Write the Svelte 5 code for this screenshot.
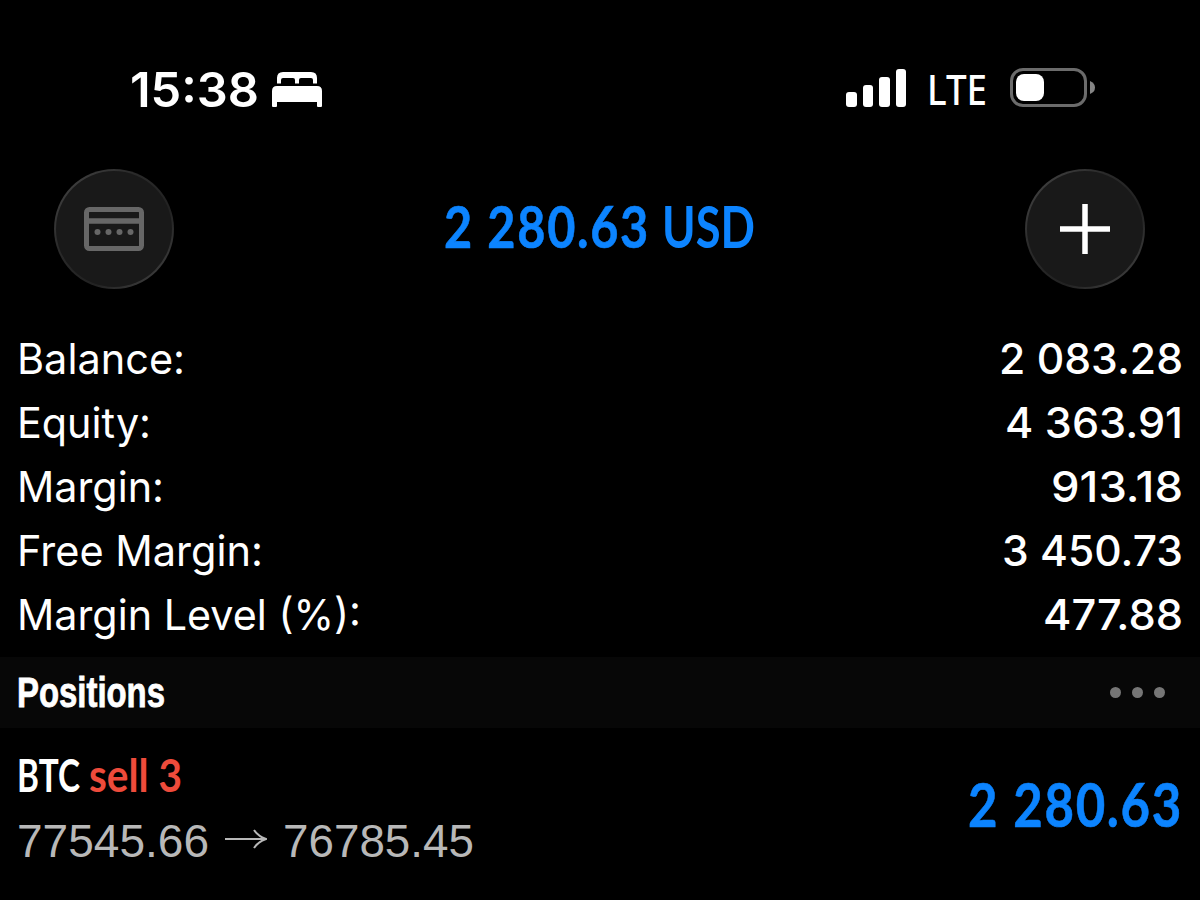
<script lang="ts">
  interface Row {
    label: string;
    labelWidth: number;
    value: string;
    valueWidth: number;
  }

  const rows: Row[] = [
    { label: 'Balance:', labelWidth: 168, value: '2 083.28', valueWidth: 184 },
    { label: 'Equity:', labelWidth: 134, value: '4 363.91', valueWidth: 178 },
    { label: 'Margin:', labelWidth: 147, value: '913.18', valueWidth: 132 },
    { label: 'Free Margin:', labelWidth: 246, value: '3 450.73', valueWidth: 181 },
    { label: 'Margin Level (%):', labelWidth: 344, value: '477.88', valueWidth: 140 },
  ];

  const bars = [15, 22, 30, 38];
</script>

<!-- One line of text set to a fixed width; `baseline` is measured from the top of its box,
     `squeeze` condenses the glyphs horizontally. -->
{#snippet line(text: string, width: number, height: number, baseline: number, kind: string, squeeze = 1)}
  <svg class={`line ${kind}`} {width} {height}>
    <text
      x="0"
      y={baseline}
      transform={`scale(${squeeze} 1)`}
      textLength={width / squeeze}
      lengthAdjust="spacingAndGlyphs">{text}</text>
  </svg>
{/snippet}

<main class="screen">
  <div class="status">
    <div class="status-left">
      {@render line('15:38', 129, 56, 45.5, 'clock')}
      <svg class="bed" width="50" height="36" viewBox="0 0 50 36" fill="#fff" aria-hidden="true">
        <path d="M5 11.5V6q0-6 6-6h28q6 0 6 6v5.5h-4V8q0-2-2-2H29q-2 0-2 2v3.5h-4V8q0-2-2-2H11q-2 0-2 2v3.5Z" />
        <path d="M0 34V19q0-5 5-5h40q5 0 5 5v15q0 1-1 1h-3q-1 0-1-1v-4H5v4q0 1-1 1H1q-1 0-1-1Z" />
      </svg>
    </div>
    <div class="status-right">
      <div class="signal">
        {#each bars as height}
          <span style:height={`${height}px`}></span>
        {/each}
      </div>
      {@render line('LTE', 60, 56, 43.5, 'network')}
      <svg class="battery" width="86" height="40" viewBox="0 0 86 40" aria-hidden="true">
        <rect x="1.5" y="1.5" width="74" height="36" rx="11.5" fill="none" stroke="#6b6b6b" stroke-width="3" />
        <rect x="6" y="6" width="28" height="27" rx="8" fill="#fff" />
        <path d="M80 13q5 2 5 6.5T80 26Z" fill="#858585" />
      </svg>
    </div>
  </div>

  <header class="toolbar">
    <button class="round" aria-label="Card">
      <svg width="60" height="44" viewBox="0 0 60 44" aria-hidden="true">
        <rect x="2.5" y="2.5" width="55" height="39" rx="3" fill="none" stroke="#676767" stroke-width="5" />
        <path d="M3 14H57" stroke="#676767" stroke-width="5.5" />
        <g fill="#676767">
          <circle cx="13.5" cy="25" r="3" />
          <circle cx="24.5" cy="25" r="3" />
          <circle cx="35.5" cy="25" r="3" />
          <circle cx="46.5" cy="25" r="3" />
        </g>
      </svg>
    </button>
    <div class="total">
      {@render line('2 280.63', 206, 70, 54, 'amount', 0.82)}
      {@render line('USD', 93, 70, 54, 'currency', 0.8)}
    </div>
    <button class="round" aria-label="Add">
      <svg width="50" height="50" viewBox="0 0 50 50" aria-hidden="true">
        <path d="M25 0V50M0 25H50" stroke="#fff" stroke-width="5.5" />
      </svg>
    </button>
  </header>

  <section class="summary">
    {#each rows as row}
      <div class="row">
        {@render line(row.label, row.labelWidth, 64, 46.4, 'label')}
        {@render line(row.value, row.valueWidth, 64, 46.4, 'value')}
      </div>
    {/each}
  </section>

  <div class="section-head">
    {@render line('Positions', 148, 71, 50, 'heading', 0.8)}
    <div class="dots"><span></span><span></span><span></span></div>
  </div>

  <section class="position">
    <div>
      <div class="deal">
        {@render line('BTC', 63, 66, 64, 'symbol', 0.72)}
        {@render line('sell 3', 93, 66, 64, 'side', 0.88)}
      </div>
      <div class="prices">
        {@render line('77545.66', 192, 66, 63, 'price')}
        <svg class="arrow" width="42" height="20" viewBox="0 0 42 20" fill="none" stroke="#b8b8b8" stroke-width="2" aria-hidden="true">
          <path d="M0 10H40M29 1Q33 7 41 10Q33 13 29 19" />
        </svg>
        {@render line('76785.45', 191, 66, 63, 'price')}
      </div>
    </div>
    {@render line('2 280.63', 215, 84, 75, 'profit', 0.81)}
  </section>
</main>

<style>
  :global(body) {
    background: #000;
  }

  .screen {
    width: 1200px;
    height: 900px;
    overflow: hidden;
    background: #000;
    color: #fff;
    font-family: Inter, 'Liberation Sans', sans-serif;
  }

  .line {
    display: block;
    flex-shrink: 0;
    overflow: visible;
    fill: currentColor;
  }

  .status {
    display: flex;
    justify-content: space-between;
    box-sizing: border-box;
    height: 169px;
    padding: 61px 104px 0 130px;
  }

  .status-left,
  .status-right {
    display: flex;
    align-items: flex-start;
  }

  .clock {
    font-size: 48px;
    font-weight: 600;
  }

  .bed {
    margin: 11px 0 0 13px;
  }

  .signal {
    display: flex;
    align-items: flex-end;
    gap: 6px;
    height: 38px;
    margin: 8px 21px 0 0;
  }

  .signal span {
    width: 10.5px;
    border-radius: 3px;
    background: #fff;
  }

  .network {
    font-family: 'Noto Sans', sans-serif;
    font-size: 41px;
    font-weight: 500;
  }

  .battery {
    margin: 7px 0 0 23px;
  }

  .toolbar {
    display: flex;
    align-items: center;
    justify-content: space-between;
    height: 120px;
    padding: 0 55px 0 54px;
  }

  .round {
    display: flex;
    align-items: center;
    justify-content: center;
    box-sizing: border-box;
    width: 120px;
    height: 120px;
    padding: 0;
    border: 2px solid transparent;
    border-radius: 50%;
    background:
      linear-gradient(#191919, #191919) padding-box,
      linear-gradient(135deg, #484848, #2a2a2a 35%, #222 65%, #484848) border-box;
  }

  .total {
    display: flex;
    gap: 12px;
  }

  .total,
  .profit {
    color: #0c84ff;
    font-family: Lato, sans-serif;
    font-weight: 700;
  }

  .total {
    font-size: 58px;
  }

  .amount,
  .profit {
    letter-spacing: 2px;
    stroke: currentColor;
    stroke-width: 0.6px;
  }

  .summary {
    margin-top: 39px;
    padding: 0 17px;
  }

  .row {
    display: flex;
    justify-content: space-between;
    height: 64px;
  }

  .label,
  .value {
    font-size: 42.5px;
  }

  .value {
    font-weight: 500;
  }

  .section-head {
    display: flex;
    align-items: center;
    justify-content: space-between;
    height: 71px;
    margin-top: 9px;
    padding: 0 35px 0 17px;
    background: #070707;
  }

  .heading {
    font-family: 'Liberation Sans', sans-serif;
    font-size: 42px;
    font-weight: 700;
    stroke: currentColor;
    stroke-width: 0.8px;
  }

  .dots {
    display: flex;
    gap: 11px;
  }

  .dots span {
    width: 11px;
    height: 11px;
    border-radius: 50%;
    background: #767676;
  }

  .position {
    display: flex;
    align-items: flex-start;
    justify-content: space-between;
    height: 172px;
    padding: 0 17px;
  }

  .deal {
    display: flex;
    gap: 9px;
  }

  .symbol,
  .side {
    font-family: Lato, sans-serif;
    font-size: 46px;
    font-weight: 700;
  }

  .side {
    color: #ee4b3b;
  }

  .prices {
    display: flex;
    color: #b8b8b8;
  }

  .price {
    font-family: 'Liberation Sans', sans-serif;
    font-size: 46px;
  }

  .arrow {
    margin: 35px 16px 0 16px;
  }

  .profit {
    margin-top: 24px;
    font-size: 61px;
  }
</style>
